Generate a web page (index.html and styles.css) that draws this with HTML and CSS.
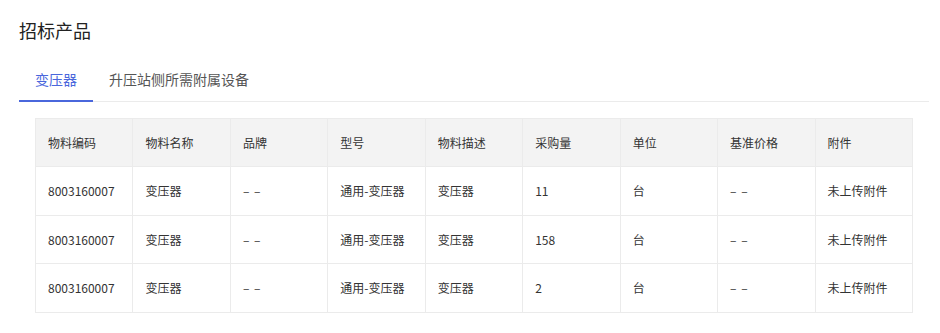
FILE: index.html
```html
<!DOCTYPE html>
<html lang="zh-CN">
<head>
<meta charset="utf-8">
<title>招标产品</title>
<link rel="stylesheet" href="styles.css">
</head>
<body>
<div class="page">
  <h2 class="title">招标产品</h2>
  <div class="tabs">
    <div class="tab active">变压器</div>
    <div class="tab">升压站侧所需附属设备</div>
  </div>
  <div class="table-wrap">
    <table class="grid">
      <thead>
        <tr>
          <th>物料编码</th><th>物料名称</th><th>品牌</th><th>型号</th><th>物料描述</th><th>采购量</th><th>单位</th><th>基准价格</th><th>附件</th>
        </tr>
      </thead>
      <tbody>
        <tr>
          <td>8003160007</td><td>变压器</td><td class="dash">– –</td><td>通用-变压器</td><td>变压器</td><td>11</td><td>台</td><td class="dash">– –</td><td>未上传附件</td>
        </tr>
        <tr>
          <td>8003160007</td><td>变压器</td><td class="dash">– –</td><td>通用-变压器</td><td>变压器</td><td>158</td><td>台</td><td class="dash">– –</td><td>未上传附件</td>
        </tr>
        <tr>
          <td>8003160007</td><td>变压器</td><td class="dash">– –</td><td>通用-变压器</td><td>变压器</td><td>2</td><td>台</td><td class="dash">– –</td><td>未上传附件</td>
        </tr>
      </tbody>
    </table>
  </div>
</div>
</body>
</html>
```
FILE: styles.css
```css
* { box-sizing: border-box; }
html, body { margin: 0; padding: 0; background: #fff; }
body {
  font-family: "Noto Sans CJK SC", "Noto Sans", sans-serif;
  color: #333;
}
.page {
  width: 910px;
  margin-left: 19px;
  padding-top: 18px;
}
.title {
  margin: 0;
  font-size: 18px;
  line-height: 24px;
  font-weight: 400;
  color: #222;
}
.tabs {
  display: flex;
  margin-top: 16px;
  box-shadow: inset 0 -1px 0 #ebebeb;
}
.tab {
  padding: 0 16px;
  font-size: 14px;
  line-height: 42px;
  color: #555;
  border-bottom: 2px solid transparent;
}
.tab.active {
  color: #4a67dc;
  border-bottom-color: #4a67dc;
}
.table-wrap {
  margin: 16px 0 0 16px;
  width: 878px;
}
.grid {
  width: 100%;
  border-collapse: collapse;
  table-layout: fixed;
  font-size: 12px;
}
.grid th, .grid td {
  border: 1px solid #ebebeb;
  text-align: left;
  padding: 0 12px;
  height: 48.5px;
  font-weight: 400;
  color: #333;
  white-space: nowrap;
}
.grid th {
  background: #f3f3f3;
  height: 48px;
}
.grid td.dash { letter-spacing: 1px; }
```
